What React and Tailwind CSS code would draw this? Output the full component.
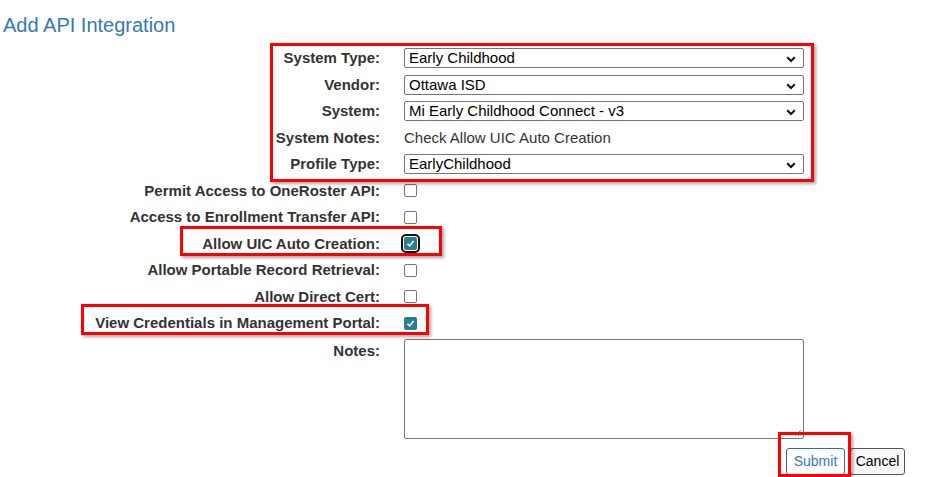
import React from "react";

const font = { fontFamily: '"Liberation Sans", Arial, sans-serif' };

function Chevron() {
  return (
    <svg width="10" height="7" viewBox="0 0 10 7" className="absolute right-[7px] top-[7px]">
      <path d="M1.2 1.2 L5 5 L8.8 1.2" fill="none" stroke="#111" strokeWidth="2" />
    </svg>
  );
}

function Select({ value }) {
  return (
    <div className="relative h-[20px] w-[400px] rounded-[2px] border border-[#767676] bg-white pl-[4px] text-[15px] leading-[18px] text-black">
      {value}
      <Chevron />
    </div>
  );
}

function Box({ checked, focus }) {
  if (!checked) {
    return <div className="h-[13px] w-[13px] rounded-[2px] border border-[#767676] bg-white" />;
  }
  return (
    <div
      className={`flex h-[13px] w-[13px] items-center justify-center rounded-[2px] bg-[#2a7f8f] ${
        focus ? "outline-2 outline-offset-1 outline-[#101010]" : ""
      }`}
    >
      <svg width="9" height="9" viewBox="0 0 9 9">
        <path d="M1.5 4.8 L3.6 6.8 L7.6 2" fill="none" stroke="#fff" strokeWidth="1.6" />
      </svg>
    </div>
  );
}

function Row({ label, children }) {
  return (
    <div className="flex h-[26.5px] items-center">
      <div className="w-[380px] text-right text-[15px] font-bold text-[#333]">{label}</div>
      <div className="ml-[24px] flex items-center">{children}</div>
    </div>
  );
}

function RedBox({ className }) {
  return (
    <div
      className={`pointer-events-none absolute border-[3px] border-[#f00] shadow-[2px_2px_3px_rgba(0,0,0,0.35)] ${className}`}
    />
  );
}

export default function App() {
  const checks = [
    ["Permit Access to OneRoster API:", false],
    ["Access to Enrollment Transfer API:", false],
    ["Allow UIC Auto Creation:", true, true],
    ["Allow Portable Record Retrieval:", false],
    ["Allow Direct Cert:", false],
    ["View Credentials in Management Portal:", true],
  ];

  return (
    <div className="relative h-[477px] w-full overflow-hidden bg-white" style={font}>
      <h1 className="pl-[3px] pt-[12px] text-[20px] leading-[26px] text-[#337ab7]">Add API Integration</h1>

      <div className="mt-[7px]">
        <Row label="System Type:">
          <Select value="Early Childhood" />
        </Row>
        <Row label="Vendor:">
          <Select value="Ottawa ISD" />
        </Row>
        <Row label="System:">
          <Select value="Mi Early Childhood Connect - v3" />
        </Row>
        <Row label="System Notes:">
          <span className="text-[15px] text-[#333]">Check Allow UIC Auto Creation</span>
        </Row>
        <Row label="Profile Type:">
          <Select value="EarlyChildhood" />
        </Row>

        {checks.map(([label, checked, focus]) => (
          <Row key={label} label={label}>
            <Box checked={checked} focus={focus} />
          </Row>
        ))}

        <div className="flex pt-[2px]">
          <div className="w-[380px] pt-[1px] text-right text-[15px] font-bold text-[#333]">Notes:</div>
          <div className="relative ml-[24px] h-[100px] w-[400px] rounded-[2px] border border-[#767676] bg-white">
            <svg width="8" height="8" viewBox="0 0 8 8" className="absolute bottom-[1px] right-[1px]">
              <path d="M7 1 L1 7 M7 4 L4 7" stroke="#888" strokeWidth="1" />
            </svg>
          </div>
        </div>

        <div className="mt-[9px] flex justify-end gap-[5px] pr-[24px]">
          <button className="h-[27px] w-[59px] rounded-[3px] border border-[#2e6da4] bg-white text-[14px] text-[#337ab7]">
            Submit
          </button>
          <button className="h-[27px] w-[55px] rounded-[3px] border border-[#555] bg-[#f8f8f8] text-[14px] text-black">
            Cancel
          </button>
        </div>
      </div>

      <RedBox className="left-[270px] top-[43px] h-[139px] w-[544px]" />
      <RedBox className="left-[180px] top-[226px] h-[30px] w-[262px]" />
      <RedBox className="left-[81px] top-[304px] h-[31px] w-[348px]" />
      <RedBox className="left-[778px] top-[432px] h-[45px] w-[73px]" />
    </div>
  );
}
